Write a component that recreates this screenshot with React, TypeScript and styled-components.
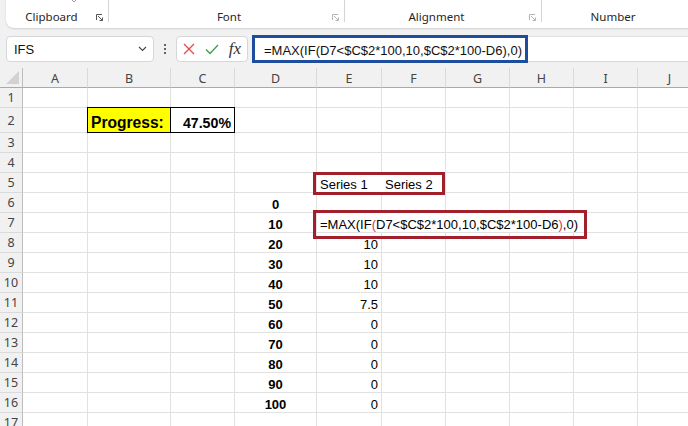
import React from 'react';
import styled, { createGlobalStyle, css } from 'styled-components';

const Global = createGlobalStyle`
  html, body { margin: 0; padding: 0; background: #f1f1f1; overflow: hidden; }
  body { width: 688px; height: 426px; font-family: "Noto Sans", "Open Sans", sans-serif; }
`;

const Page = styled.div`
  width: 688px;
  height: 426px;
  display: flex;
  flex-direction: column;
  background: #f1f1f1;
  overflow: hidden;
`;

/* ---------- Ribbon ---------- */
const Ribbon = styled.div`
  flex: none;
  margin-left: 6px;
  height: 28px;
  background: #fff;
  border-radius: 0 0 0 8px;
  box-shadow: 0 1px 2px rgba(0, 0, 0, 0.14);
  display: grid;
  grid-template-columns: 103px 236px 197px 1fr;
`;

const Group = styled.div<{ $last?: boolean }>`
  position: relative;
  display: flex;
  align-items: flex-end;
  justify-content: center;
  padding-bottom: 3px;
  box-sizing: border-box;
  &::after {
    content: '';
    display: ${(p) => (p.$last ? 'none' : 'block')};
    position: absolute;
    right: 0;
    top: 0;
    height: 22px;
    width: 1px;
    background: #d4d4d4;
  }
`;

const GroupLabel = styled.span<{ $shift: number }>`
  font-family: "Noto Sans", sans-serif;
  font-size: 11.5px;
  line-height: 16px;
  color: #262626;
  transform: translateX(${(p) => p.$shift}px);
`;

const Launcher = styled.svg<{ $dim?: boolean }>`
  position: absolute;
  right: 6px;
  bottom: 7px;
  width: 7px;
  height: 7px;
  color: ${(p) => (p.$dim ? '#b4b4b4' : '#555')};
`;

const TopChevron = styled.svg`
  position: absolute;
  left: 64px;
  top: -2px;
  width: 8px;
  height: 5px;
  color: #9a9a9a;
`;

const LauncherIcon = ({ dim }: { dim?: boolean }) => (
  <Launcher $dim={dim} viewBox="0 0 7 7" fill="none" stroke="currentColor" strokeWidth="1">
    <path d="M0.5 6 V0.5 H6" />
    <path d="M2 2 L6.3 6.3" />
    <path d="M6.5 3.5 V6.5 H3.5" />
  </Launcher>
);

/* ---------- Formula bar ---------- */
const FormulaRow = styled.div`
  flex: none;
  margin-top: 8px;
  height: 26px;
  display: flex;
  align-items: stretch;
`;

const NameBox = styled.div`
  margin-left: 6px;
  width: 148px;
  box-sizing: border-box;
  background: #fff;
  border: 1px solid #d6d6d6;
  border-radius: 4px;
  display: flex;
  align-items: center;
  justify-content: space-between;
  padding: 0 6px 0 7px;
  font-family: "Liberation Sans", Arial, sans-serif;
  font-size: 13px;
  color: #111;
`;

const Chevron = styled.svg`
  width: 9px;
  height: 6px;
  color: #444;
`;

const Dots = styled.div`
  width: 22px;
  display: flex;
  flex-direction: column;
  align-items: center;
  justify-content: center;
  gap: 2px;
  & > i {
    width: 2px;
    height: 2px;
    border-radius: 1px;
    background: #333;
    display: block;
  }
`;

const ButtonsBox = styled.div`
  width: 72px;
  box-sizing: border-box;
  background: #fff;
  border: 1px solid #d6d6d6;
  border-radius: 4px;
  display: flex;
  align-items: center;
  justify-content: space-between;
  padding: 0 6px 0 6px;
`;

const Fx = styled.span`
  font-family: "Liberation Serif", "Times New Roman", serif;
  font-style: italic;
  font-size: 17px;
  color: #333;
  line-height: 1;
  margin-bottom: 2px;
`;

const FormulaInput = styled.div`
  position: relative;
  flex: 1;
  margin-left: 4px;
  background: #fff;
  border-top: 1px solid #e0e0e0;
  border-bottom: 1px solid #d6d6d6;
  display: flex;
  align-items: center;
  padding-left: 12px;
  font-family: "Liberation Sans", Arial, sans-serif;
  font-size: 13px;
  color: #111;
  white-space: nowrap;
  padding-top: 2px;
  box-sizing: border-box;
`;

const BlueFrame = styled.div`
  position: absolute;
  left: 0;
  top: -2px;
  width: 276px;
  height: 28px;
  box-sizing: border-box;
  border: 3px solid #1f4d9e;
  pointer-events: none;
`;

/* ---------- Sheet ---------- */
const Sheet = styled.div`
  flex: none;
  margin-top: 6px;
  position: relative;
  display: grid;
  grid-template-columns: 23px 65px 83px 64px 82px 65px repeat(5, 64px);
  grid-template-rows: 20px 20px 25px repeat(15, 20px);
  width: 702px;
`;

const Corner = styled.div`
  background: #f1f1f1;
  border-right: 1px solid #bdbdbd;
  border-bottom: 1px solid #a9a9a9;
  box-sizing: border-box;
  display: flex;
  align-items: flex-end;
  justify-content: flex-end;
  padding: 0 3px 3px 0;
`;

const ColHead = styled.div`
  background: #f1f1f1;
  border-right: 1px solid #dadada;
  border-bottom: 1px solid #a9a9a9;
  box-sizing: border-box;
  display: flex;
  align-items: center;
  justify-content: center;
  font-family: "Noto Sans", sans-serif;
  font-size: 12.5px;
  color: #444;
  padding-top: 1px;
`;

const RowHead = styled.div`
  background: #f1f1f1;
  border-right: 1px solid #bdbdbd;
  border-bottom: 1px solid #dadada;
  box-sizing: border-box;
  display: flex;
  align-items: center;
  justify-content: center;
  font-family: "Noto Sans", sans-serif;
  font-size: 12.5px;
  color: #444;
`;

type Align = 'left' | 'right' | 'center';

const justify = (a?: Align) => (a === 'right' ? 'flex-end' : a === 'center' ? 'center' : 'flex-start');

const Cell = styled.div<{
  $align?: Align;
  $bold?: boolean;
  $size?: number;
  $fill?: string;
  $boxed?: boolean;
  $clean?: boolean;
  $span?: number;
}>`
  box-sizing: border-box;
  display: flex;
  align-items: flex-end;
  justify-content: ${(p) => justify(p.$align)};
  padding: 0 3px;
  background: ${(p) => p.$fill || '#fff'};
  border-right: 1px solid ${(p) => (p.$clean ? 'transparent' : '#e1e1e1')};
  border-bottom: 1px solid #e1e1e1;
  font-family: "Liberation Sans", Arial, sans-serif;
  font-size: ${(p) => p.$size || 13}px;
  font-weight: ${(p) => (p.$bold ? 700 : 400)};
  line-height: ${(p) => ((p.$size || 13) > 14 ? 18 : 15)}px;
  color: #000;
  white-space: nowrap;
  grid-column: span ${(p) => p.$span || 1};
  ${(p) =>
    p.$boxed &&
    css`
      border-right-color: #000;
      border-bottom-color: #000;
      box-shadow: -1px 0 0 #000, 0 -1px 0 #000, -1px -1px 0 #000;
    `}
`;

const Paren = styled.span`
  color: #e0304e;
`;

const Annot = styled.div<{ $x: number; $y: number; $w: number; $h: number }>`
  position: absolute;
  left: ${(p) => p.$x}px;
  top: ${(p) => p.$y}px;
  width: ${(p) => p.$w}px;
  height: ${(p) => p.$h}px;
  box-sizing: border-box;
  border: 3px solid #a1202b;
  pointer-events: none;
`;

type CellSpec = {
  text?: React.ReactNode;
  align?: Align;
  bold?: boolean;
  size?: number;
  fill?: string;
  boxed?: boolean;
  clean?: boolean;
  span?: number;
};

const COLS = ['A', 'B', 'C', 'D', 'E', 'F', 'G', 'H', 'I', 'J'];
const FORMULA = '=MAX(IF(D7<$C$2*100,10,$C$2*100-D6),0)';

const cellFormula = (
  <>
    =MAX(IF<Paren>(</Paren>D7&lt;$C$2*100,10,$C$2*100-D6<Paren>)</Paren>,0)
  </>
);

const eValues: Record<number, string> = {
  8: '10',
  9: '10',
  10: '10',
  11: '7.5',
  12: '0',
  13: '0',
  14: '0',
  15: '0',
  16: '0',
};

const buildData = (): Record<number, Record<string, CellSpec>> => {
  const d: Record<number, Record<string, CellSpec>> = {
    2: {
      B: { text: 'Progress:', bold: true, size: 15.6, fill: '#ffff00', boxed: true },
      C: { text: '47.50%', bold: true, size: 14.2, align: 'right', boxed: true },
    },
    5: { E: { text: 'Series 1', clean: true }, F: { text: 'Series 2' } },
  };
  for (let r = 6; r <= 16; r++) {
    d[r] = d[r] || {};
    d[r].D = { text: String((r - 6) * 10), bold: true, align: 'center' };
    if (eValues[r]) d[r].E = { text: eValues[r], align: 'right' };
  }
  d[7].E = { text: cellFormula, span: 5 };
  return d;
};

const DATA = buildData();

const Row = ({ r }: { r: number }) => {
  const specs = DATA[r] || {};
  const out: React.ReactNode[] = [<RowHead key="h">{r}</RowHead>];
  let skip = 0;
  COLS.forEach((c) => {
    if (skip > 0) {
      skip--;
      return;
    }
    const s = specs[c];
    if (s?.span) skip = s.span - 1;
    out.push(
      <Cell
        key={c}
        $align={s?.align}
        $bold={s?.bold}
        $size={s?.size}
        $fill={s?.fill}
        $boxed={s?.boxed}
        $clean={s?.clean}
        $span={s?.span}
      >
        {s?.text}
      </Cell>
    );
  });
  return <>{out}</>;
};

export default function App() {
  const rows = Array.from({ length: 17 }, (_, i) => i + 1);
  return (
    <Page>
      <Global />
      <Ribbon>
        <Group>
          <TopChevron viewBox="0 0 8 5" fill="none" stroke="currentColor" strokeWidth="1">
            <path d="M1 1 L4 4 L7 1" />
          </TopChevron>
          <GroupLabel $shift={-6}>Clipboard</GroupLabel>
          <LauncherIcon />
        </Group>
        <Group>
          <GroupLabel $shift={2}>Font</GroupLabel>
          <LauncherIcon dim />
        </Group>
        <Group>
          <GroupLabel $shift={-7}>Alignment</GroupLabel>
          <LauncherIcon dim />
        </Group>
        <Group $last>
          <GroupLabel $shift={-2}>Number</GroupLabel>
        </Group>
      </Ribbon>

      <FormulaRow>
        <NameBox>
          <span>IFS</span>
          <Chevron viewBox="0 0 9 6" fill="none" stroke="currentColor" strokeWidth="1.1">
            <path d="M1 1 L4.5 4.5 L8 1" />
          </Chevron>
        </NameBox>
        <Dots>
          <i />
          <i />
          <i />
        </Dots>
        <ButtonsBox>
          <svg width="12" height="12" viewBox="0 0 12 12" fill="none" stroke="#e5484d" strokeWidth="1.3">
            <path d="M1 1 L11 11 M11 1 L1 11" />
          </svg>
          <svg width="14" height="11" viewBox="0 0 14 11" fill="none" stroke="#3f9c4a" strokeWidth="1.3">
            <path d="M1 5.5 L5 9.5 L13 1" />
          </svg>
          <Fx>fx</Fx>
        </ButtonsBox>
        <FormulaInput>
          {FORMULA}
          <BlueFrame />
        </FormulaInput>
      </FormulaRow>

      <Sheet>
        <Corner>
          <svg width="13" height="13" viewBox="0 0 13 13">
            <polygon points="13,0 13,13 0,13" fill="#d2d2d2" />
          </svg>
        </Corner>
        {COLS.map((c) => (
          <ColHead key={c}>{c}</ColHead>
        ))}
        {rows.map((r) => (
          <Row key={r} r={r} />
        ))}
        <Annot $x={313} $y={104} $w={132} $h={23} />
        <Annot $x={313} $y={142} $w={274} $h={29} />
      </Sheet>
    </Page>
  );
}
